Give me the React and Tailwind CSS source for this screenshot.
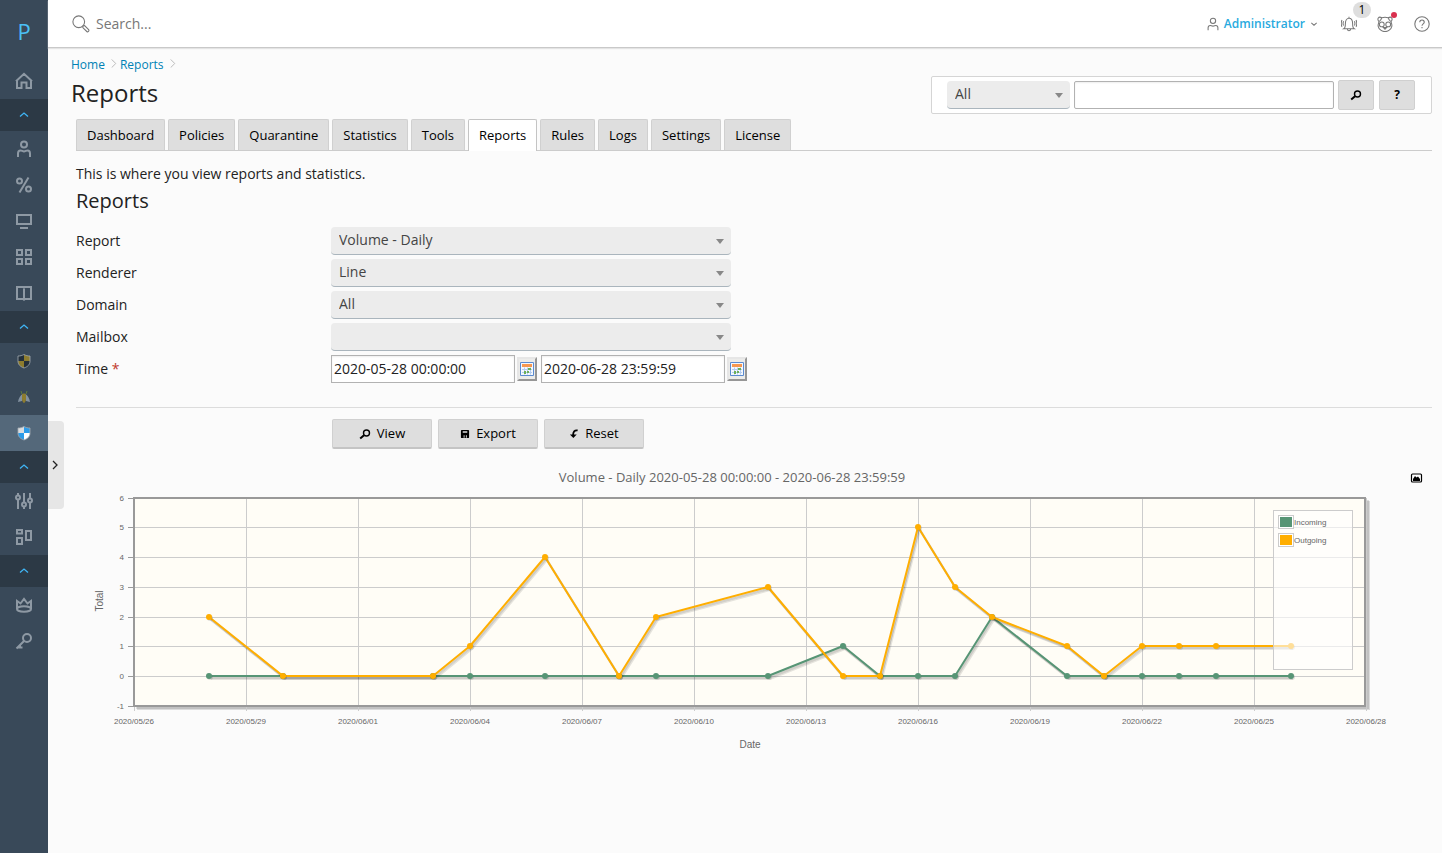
import { useState } from 'react'

const TABS = ['Dashboard', 'Policies', 'Quarantine', 'Statistics', 'Tools', 'Reports', 'Rules', 'Logs', 'Settings', 'License']

// [day offset from 2020/05/26, total]
const OUTGOING = [[2, 2], [4, 0], [8, 0], [9, 1], [11, 4], [13, 0], [14, 2], [17, 3], [19, 0], [20, 0], [21, 5], [22, 3], [23, 2], [25, 1], [26, 0], [27, 1], [28, 1], [29, 1], [31, 1]]
const INCOMING = OUTGOING.map(([d]) => [d, d === 19 ? 1 : d === 23 ? 2 : 0])
const DATES = ['05/26', '05/29', '06/01', '06/04', '06/07', '06/10', '06/13', '06/16', '06/19', '06/22', '06/25', '06/28']

function Icon({ children, size = 20, className = '', ...rest }) {
  return (
    <svg width={size} height={size} viewBox="0 0 20 20" fill="none" stroke="currentColor" strokeWidth="2" className={className} aria-hidden="true" {...rest}>
      {children}
    </svg>
  )
}

const NAV = [
  { name: 'Home', icon: <path d="M3 9v8h4.500v-5.500h5V17H17V9M2 10.200l8-7.400 8 7.400" /> },
  { group: true },
  { name: 'Customers', icon: <><circle cx="10" cy="5.500" r="3" /><path d="M4 18v-3.500c0-2 1-3 2.500-3 1.500 0 2 .9 3.500.9s2-.9 3.500-.9c1.500 0 2.500 1 2.500 3V18" /></> },
  { name: 'Resellers', icon: <><circle cx="5.500" cy="6" r="2.500" /><circle cx="14.500" cy="14" r="2.500" /><path d="M14.500 2.500l-9 15" /></> },
  { name: 'Domains', icon: <path d="M3 4h14v9H3zM6 17h8" /> },
  { name: 'Subscriptions', icon: <path d="M3 3h5v5H3zM12 3h5v5h-5zM3 12h5v5H3zM12 12h5v5h-5z" /> },
  { name: 'Service Plans', icon: <path d="M10 4v13.500M3 4h6l1 .8 1-.8h6v12h-6l-1 .8-1-.8H3z" /> },
  { group: true },
  { name: 'Warden', icon: <Shield a="#24303b" b="#8d7c2e" /> },
  {
    name: 'Firefly',
    icon: (
      <g stroke="none">
        <path d="M9 7C6.500 8 4.500 11 4 15l4-1 1.500-5zM11 7c2.500 1 4.500 4 5 8l-4-1-1.500-5z" fill="#8391a0" />
        <path d="M8 8c0-2 4-2 4 0v4c0 2-1 3.500-2 4-1-.5-2-2-2-4z" fill="#8d7c2e" />
        <path d="M8 7L7 4M12 7l1-3" stroke="#5d7a3f" strokeWidth="1" />
      </g>
    ),
  },
  { name: 'Email Security', active: true, icon: <Shield a="#d9dde0" b="#2c9be8" c="#ffffff" /> },
  { group: true },
  { name: 'Tools', icon: <><path d="M4 2v2M4 9v9M10 2v9M10 16v2M16 2v5M16 12v6" /><circle cx="4" cy="6.500" r="2" /><circle cx="10" cy="13.500" r="2" /><circle cx="16" cy="9.500" r="2" /></> },
  { name: 'Extensions', icon: <path d="M3 3h5v3.500H3zM3 11h5v6H3zM12 4h5v9h-5z" /> },
  { group: true },
  { name: 'My Profile', icon: <><path d="M3 14V6l3.500 2.500L10 4l3.500 4.500L17 6v8" /><ellipse cx="10" cy="14" rx="7" ry="2.800" /></> },
  { name: 'Password', icon: <><circle cx="13" cy="7" r="4" /><path d="M10.300 9.700L2.500 17.500M3 16.500h3M6 14v2.500h2.500" /></> },
]

function Shield({ a, b, c = a }) {
  return (
    <g stroke="none">
      <path d="M10 3.500V10H4V5c2.500 0 4-.5 6-1.500z" fill={a} />
      <path d="M10 3.500c2 1 3.500 1.500 6 1.500v5h-6z" fill={b} />
      <path d="M4 10h6v7c-4-1.500-6-3.500-6-7z" fill={b} />
      <path d="M16 10h-6v7c4-1.500 6-3.500 6-7z" fill={c} />
      <path d="M10 3.500C8 4.500 6.500 5 4 5v5c0 3.500 2 5.500 6 7 4-1.500 6-3.500 6-7V5c-2.500 0-4-.5-6-1.500z" fill="none" stroke="#a3abb1" strokeWidth="0.8" />
    </g>
  )
}

function Sidebar() {
  return (
    <nav className="w-12 shrink-0 bg-[#394959] text-[#8e99a4]" aria-label="Main">
      <a href="#" className="flex h-[63px] items-center justify-center text-[22px] text-[#4bc0f5]">P</a>
      <ul>
        {NAV.map((item, i) => (
          <li key={i}>
            {item.group ? (
              <button aria-label="Collapse group" className="flex h-8 w-full items-center justify-center bg-[#2c3945] text-[#3fb5f5]">
                <Icon size={10} strokeWidth="2.6"><path d="M2 13l8-7 8 7" /></Icon>
              </button>
            ) : (
              <a href="#" aria-label={item.name} className={`flex h-9 items-center justify-center ${item.active ? 'bg-[#54687a]' : ''}`}>
                <Icon>{item.icon}</Icon>
              </a>
            )}
          </li>
        ))}
      </ul>
    </nav>
  )
}

function Header() {
  return (
    <header className="flex h-12 items-center border-b border-[#c9c9c9] bg-white pl-6 pr-[11px] text-[#777] shadow-[0_1px_1px_#e4e4e4]">
      <Icon size={18} strokeWidth="1.2"><circle cx="7.500" cy="7.500" r="6.500" /><path d="M12.500 12l1.500-.2 4.700 4.800c.6 1-1 2.600-2 2l-4.700-4.700.2-1.500z" /></Icon>
      <input aria-label="Search" placeholder="Search..." className="ml-1.5 w-60 flex-1 text-sm outline-none placeholder:text-[#777]" />
      <button className="mr-6 flex items-center text-xs font-semibold text-[#28aade]">
        <Icon size={14} strokeWidth="1.5" className="mr-1 text-[#777]"><circle cx="10" cy="5.500" r="3.800" /><path d="M3 19v-3.500c0-2 1-3.500 3-3.500 1.500 0 2 1 4 1s2.500-1 4-1c2 0 3 1.500 3 3.500V19" /></Icon>
        Administrator
        <Icon size={6} strokeWidth="3.4" className="ml-1.5 text-[#777]"><path d="M1 6l9 8 9-8" /></Icon>
      </button>
      <button aria-label="Notifications" className="relative mr-5">
        <Icon size={16} strokeWidth="1.3"><path d="M10 1v1.500M3.500 16c2-1.200 2-3 2-6.500 0-4 1.800-6.800 4.500-6.800s4.500 2.800 4.500 6.800c0 3.500 0 5.300 2 6.500zM8 16.500c.3 2.500 3.700 2.500 4 0M3.300 6.500c-.8 1.500-.8 4 0 5.500M1.200 5c-1.200 3-1.200 6 0 8.500M16.700 6.500c.8 1.500.8 4 0 5.500M18.800 5c1.200 3 1.200 6 0 8.500" /></Icon>
        <span className="absolute -top-3.5 left-3 h-4 w-[18px] rounded-full bg-[#dedede] text-xs leading-4 text-black">1</span>
      </button>
      <button aria-label="Panda" className="relative mr-5">
        <Icon size={16} strokeWidth="1.3"><path d="M2.500 7C-.5 3.500 2 0 6 2.200c3-.9 5-.9 8 0 4-2.200 6.500 1.300 3.500 4.800.5 2 1.500 3.500 1 6-.8 4-5 6.500-8.500 6.500S2.300 17 1.500 13c-.5-2.500.5-4 1-6zM2.500 7c1.500-1 3-3 3.500-4.800M17.500 7C16 6 14.500 4 14 2.200" /><circle cx="6" cy="10.500" r="3" /><circle cx="14" cy="10.500" r="3" /><path d="M8 14.500h4l-2 2z" /></Icon>
        <span className="absolute -right-1 -top-1 size-1.5 rounded-full bg-[#d9304f]" />
      </button>
      <button aria-label="Help">
        <Icon size={18} strokeWidth="1.2"><circle cx="10" cy="10" r="8" /><path d="M7.500 8c0-3.300 5-3.300 5 0 0 1.800-2.500 2-2.500 4M10 13.300v1.500" /></Icon>
      </button>
    </header>
  )
}

function Select({ id, value, className = '', ...rest }) {
  return (
    <span className={`relative inline-flex ${className}`}>
      <select id={id} defaultValue={value} className="h-7 w-full appearance-none rounded border-b border-[#aab5bd] bg-[#ececec] pb-0.5 pl-2 text-sm text-[#444] outline-none" {...rest}>
        <option>{value}</option>
      </select>
      <svg width="8" height="5" className="pointer-events-none absolute right-[7px] top-3" aria-hidden="true"><path d="M0 0h8L4 5z" fill="#888" /></svg>
    </span>
  )
}

function Magnifier() {
  return <svg width="12" height="12" viewBox="0 0 12 12" fill="none" stroke="#000" strokeWidth="1.4" aria-hidden="true"><circle cx="7.500" cy="5" r="3" /><path d="M5 7.200L1.200 10.400" strokeWidth="2" /></svg>
}

function CalendarButton({ label }) {
  return (
    <button aria-label={label} className="flex h-6 w-5 items-center justify-center border-2 border-[#e6e6e6] border-b-[#969696] border-r-[#969696] bg-[#ececea]">
      <svg width="14" height="14" viewBox="0 0 14 14" className="shrink-0" aria-hidden="true">
        <path d="M.5.5h13v13H.5z" fill="#f4f8fe" stroke="#5b8bd0" />
        <path d="M2 2h10v3H2z" fill="#f79850" />
        <path d="M2 7.500h10M2 10.500h10M4.500 5.500v7M7.500 5.500v7M10.500 5.500v7" stroke="#b4cdf0" />
        <path d="M8 6h3v2H8zM4 9h2v3H4zM7 9h2v2H7z" fill="#6caf58" />
      </svg>
    </button>
  )
}

function ActionButton({ icon, children }) {
  return (
    <button className="flex h-[30px] w-[100px] items-center justify-center gap-1.5 rounded-xs border border-[#d0d0d0] border-b-2 border-b-[#c4c4c4] bg-[#dedede] text-[13px] text-black">
      {icon}
      {children}
    </button>
  )
}

const px = d => 58 + Math.round(d * 37.32)
const py = v => 212 - Math.round(v * 29.7)

function Series({ points, color }) {
  const line = points.map(([d, v]) => `${px(d)},${py(v)}`).join(' ')
  return (
    <g>
      <g fill="none" stroke="#000" strokeOpacity="0.1" strokeWidth="2" strokeLinejoin="round">
        <polyline points={line} transform="translate(1 1)" />
        <polyline points={line} transform="translate(1 2)" />
        <polyline points={line} transform="translate(2 3)" />
      </g>
      <polyline points={line} fill="none" stroke={color} strokeWidth="2" strokeLinejoin="round" />
      {points.map(([d, v]) => (
        <g key={d}>
          <circle cx={px(d) + 1} cy={py(v) + 1} r="3" opacity="0.2" />
          <circle cx={px(d)} cy={py(v)} r="3" fill={color} />
        </g>
      ))}
    </g>
  )
}

function Chart() {
  const tick = "font-['Liberation_Sans',sans-serif] text-[8px]"
  const axis = "font-['Liberation_Sans',sans-serif] text-[10px]"

  return (
    <svg viewBox="0 0 1356 292" className="h-auto w-full" fill="#666" role="img" aria-label="Volume - Daily">
      <text x="656" y="18" textAnchor="middle" className="text-[13px]">Volume - Daily 2020-05-28 00:00:00 - 2020-06-28 23:59:59</text>
      <g>
        <rect x="1335.500" y="10" width="10" height="8" rx="1" fill="#fff" stroke="#000" strokeWidth="1.2" />
        <path d="M1337 17v-2l2-3 1.500 1.500 1.500-1 2 2.500v2z" fill="#000" />
      </g>
      <g fill="none" stroke="#000" strokeOpacity="0.12">
        <path d="M60 243.500H1291.500V36" strokeWidth="3" />
        <path d="M61 244.500H1292.500V37" strokeWidth="3" />
      </g>
      <rect x="58" y="34" width="1231" height="208" fill="#fffdf6" />
      <g stroke="#ccc">
        {DATES.map((d, i) => <path key={d} d={`M${px(i * 3) + 0.5} 34V247`} />)}
        {[0, 1, 2, 3, 4, 5].map(v => <path key={v} d={`M52 ${py(v) + 0.5}H1289`} />)}
      </g>
      <rect x="58" y="34" width="1231" height="208" fill="none" stroke="#999" strokeWidth="2" />
      {[-1, 0, 1, 2, 3, 4, 5, 6].map(v => (
        <g key={v}>
          <path d={`M52 ${py(v) + 0.5}h6`} stroke="#999" />
          <text x="48" y={py(v) + 3} textAnchor="end" className={tick}>{v}</text>
        </g>
      ))}
      {DATES.map((d, i) => (
        <text key={d} x={px(i * 3)} y="260" textAnchor="middle" className={tick}>2020/{d}</text>
      ))}
      <text x="674" y="284" textAnchor="middle" className={axis}>Date</text>
      <text transform="translate(27 137) rotate(-90)" textAnchor="middle" className={axis}>Total</text>
      <Series points={INCOMING} color="#579575" />
      <Series points={OUTGOING} color="#ffae00" />
      <rect x="1197.500" y="46.500" width="79" height="159" fill="#fff" fillOpacity="0.6" stroke="#ccc" />
      {[['Incoming', '#579575'], ['Outgoing', '#ffae00']].map(([name, color], i) => (
        <g key={name}>
          <rect x="1202.500" y={51.5 + i * 18} width="15" height="13" fill="#fff" stroke="#ccc" />
          <rect x="1204" y={53 + i * 18} width="12" height="10" fill={color} />
          <text x="1218" y={61 + i * 18} className={tick}>{name}</text>
        </g>
      ))}
    </svg>
  )
}

function Row({ label, id, children }) {
  return (
    <div className="flex h-8 items-center">
      <label htmlFor={id} className="w-[255px] shrink-0">{label}</label>
      {children}
    </div>
  )
}

export default function App() {
  const [tab, setTab] = useState('Reports')
  const dateInput = 'h-7 w-[184px] border border-[#b2b2b2] bg-white px-0.5 pb-0.5 text-sm shadow-[inset_0_1px_2px_#eee] outline-none'

  return (
    <div className="flex min-h-screen bg-[#fbfbfb] font-['Open_Sans',sans-serif] text-sm text-[#222]">
      <Sidebar />
      <div className="relative min-w-0 flex-1">
        <button aria-label="Expand sidebar" className="absolute left-0 top-[421px] flex h-[88px] w-4 items-center justify-center rounded-r bg-[#e6e6e6] pr-0.5 text-[#222]">
          <Icon size={10} strokeWidth="2.6"><path d="M6 2l8 8-8 8" /></Icon>
        </button>
        <Header />

        <main className="pb-6 pl-7 pr-2.5">
          <div className="-ml-[5px] flex items-end justify-between">
            <div>
              <nav aria-label="Breadcrumb" className="flex h-8 items-center pt-0.5 text-xs text-[#0082b5]">
                {['Home', 'Reports'].map(name => (
                  <span key={name} className="flex items-center">
                    <a href="#">{name}</a>
                    <Icon size={9} className="mb-1 ml-1 mr-0.5 text-[#bbb]" strokeWidth="2.2"><path d="M6 1l9 9-9 9" /></Icon>
                  </span>
                ))}
              </nav>
              <h1 className="h-[34px] text-2xl leading-[26px]">Reports</h1>
            </div>
            <form className="flex h-[38px] items-center gap-1 rounded-xs border border-[#d5d5d5] bg-white pl-[15px] pr-4" onSubmit={e => e.preventDefault()}>
              <Select value="All" aria-label="Search scope" className="w-[123px]" />
              <input aria-label="Search text" className="h-7 w-[260px] rounded-xs border border-[#b2b2b2] bg-white px-1 shadow-[inset_0_1px_2px_#eee] outline-none" />
              <button aria-label="Find" className="flex h-[30px] w-9 items-center justify-center rounded-xs border border-[#d0d0d0] bg-[#dedede]"><Magnifier /></button>
              <button className="ml-px h-[30px] w-9 rounded-xs border border-[#d0d0d0] bg-[#dedede] text-xs font-bold text-black">?</button>
            </form>
          </div>

          <div role="tablist" className="mt-[5px] flex gap-[3px] border-b border-[#ccc] text-[13px] text-black">
            {TABS.map(t => (
              <button
                key={t}
                role="tab"
                aria-selected={t === tab}
                onClick={() => setTab(t)}
                className={`rounded-t-xs border border-b-0 px-2.5 ${t === tab ? '-mb-px h-8 border-[#c4c4c4] bg-white' : 'h-[31px] border-[#d0d0d0] bg-[#dedede]'}`}
              >
                {t}
              </button>
            ))}
          </div>

          <p className="mt-[11px] leading-6">This is where you view reports and statistics.</p>
          <h2 className="text-xl leading-[30px]">Reports</h2>

          <form className="mt-[9px]" onSubmit={e => e.preventDefault()}>
            <Row label="Report" id="report"><Select id="report" value="Volume - Daily" className="w-[400px]" /></Row>
            <Row label="Renderer" id="renderer"><Select id="renderer" value="Line" className="w-[400px]" /></Row>
            <Row label="Domain" id="domain"><Select id="domain" value="All" className="w-[400px]" /></Row>
            <Row label="Mailbox" id="mailbox"><Select id="mailbox" value="" className="w-[400px]" /></Row>
            <Row label={<>Time <span className="text-[#c0392b]">*</span></>} id="from">
              <input id="from" defaultValue="2020-05-28 00:00:00" className={dateInput} />
              <span className="ml-0.5 mr-1"><CalendarButton label="Pick start" /></span>
              <input aria-label="End time" defaultValue="2020-06-28 23:59:59" className={dateInput} />
              <span className="ml-0.5"><CalendarButton label="Pick end" /></span>
            </Row>

            <div className="mt-[22px] flex gap-1.5 border-t border-[#dcdcdc] pb-[15px] pl-64 pt-[11px]">
              <ActionButton icon={<Magnifier />}>View</ActionButton>
              <ActionButton icon={<svg width="10" height="10" viewBox="0 0 11 10" aria-hidden="true"><path d="M1 1.500Q1 .5 2 .5h7q1 0 1 1v7q0 1-1 1H2q-1 0-1-1z" /><path d="M3 2h5v1.500H3zM4 6.500h1V9H4zM6.500 6.500h1V9h-1z" fill="#dedede" /></svg>}>Export</ActionButton>
              <ActionButton icon={<svg width="10" height="10" viewBox="0 0 11 11" aria-hidden="true"><path d="M9.500 1.500C6 1 4.500 3 4.500 7" fill="none" stroke="#000" strokeWidth="2" /><path d="M1 6h7.500L4.800 10z" /></svg>}>Reset</ActionButton>
            </div>
          </form>

          <Chart />
        </main>
      </div>
    </div>
  )
}
